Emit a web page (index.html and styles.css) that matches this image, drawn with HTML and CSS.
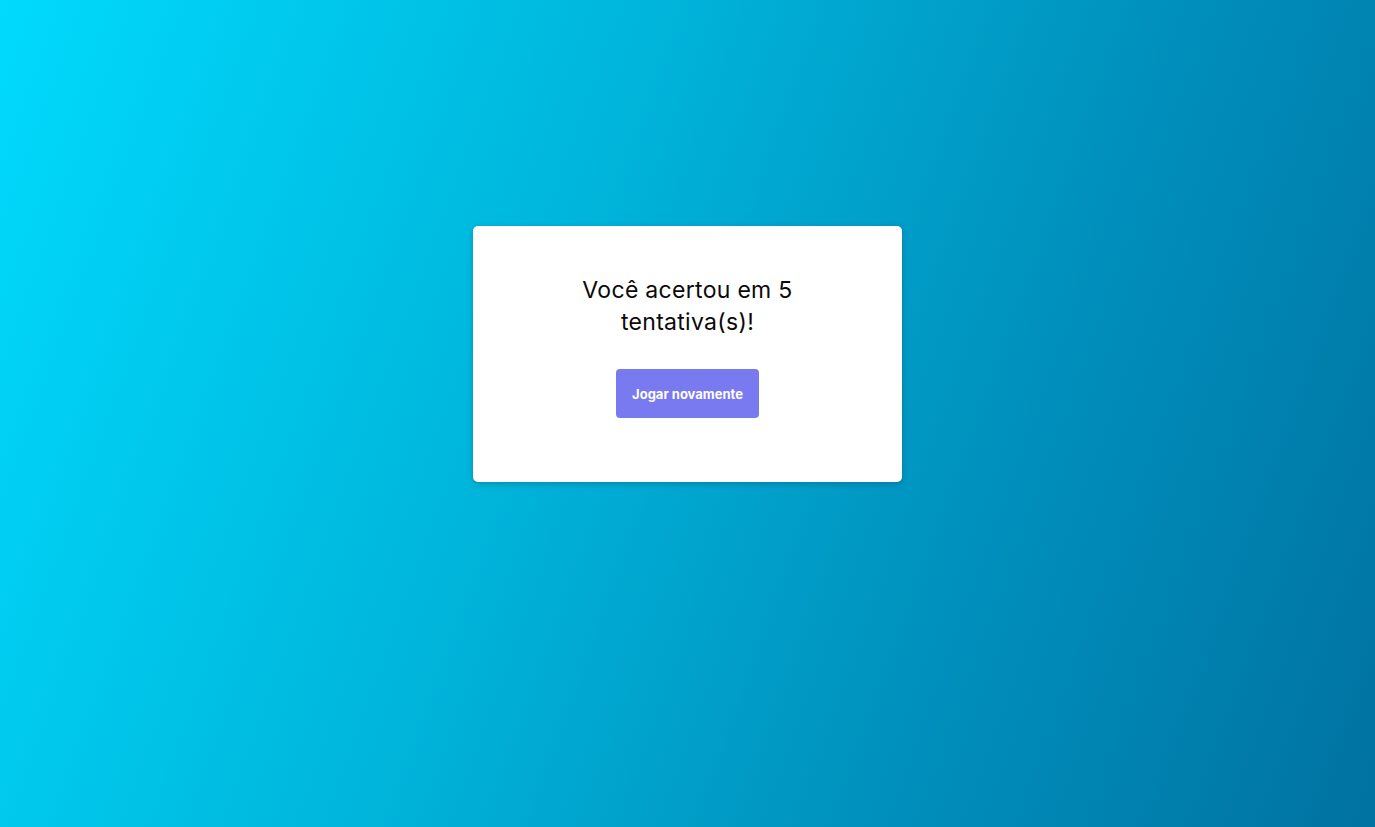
FILE: index.html
```html
<!DOCTYPE html>
<html lang="pt-BR">
<head>
<meta charset="utf-8">
<title>Resultado</title>
<link rel="stylesheet" href="styles.css">
</head>
<body>
<main class="page">
  <section class="card">
    <h2 class="result">Você acertou em 5 tentativa(s)!</h2>
    <button class="btn">Jogar novamente</button>
  </section>
</main>
</body>
</html>
```

FILE: styles.css
```css
* { box-sizing: border-box; }
html, body {
  margin: 0;
  height: 100%;
}
body {
  font-family: "Inter", "Open Sans", sans-serif;
  background: linear-gradient(110deg, #00dafd 0%, #00b4da 40%, #0090bd 70%, #0072a1 100%);
  min-height: 827px;
}
.page {
  display: flex;
  justify-content: center;
  align-items: flex-start;
  padding-top: 226px;
}
.card {
  width: 429px;
  height: 256px;
  background: #ffffff;
  border-radius: 5px;
  box-shadow: 0 2px 6px rgba(0, 40, 70, 0.25);
  display: flex;
  flex-direction: column;
  align-items: center;
  padding: 48px 70px 0;
}
.result {
  margin: 0;
  font-weight: 400;
  font-size: 23px;
  line-height: 32px;
  color: #0a0a0a;
  text-align: center;
  max-width: 240px;
  letter-spacing: 0.3px;
}
.btn {
  margin-top: 31px;
  width: 143px;
  height: 49px;
  border: 0;
  border-radius: 4px;
  background: #7979f0;
  color: #fff;
  font-family: "Inter", "Open Sans", sans-serif;
  font-weight: 700;
  font-size: 13px;
  cursor: pointer;
}
```
